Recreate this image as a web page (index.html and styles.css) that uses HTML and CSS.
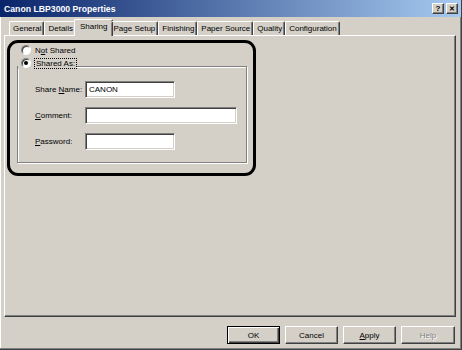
FILE: index.html
```html
<!DOCTYPE html>
<html lang="en">
<head>
    <meta charset="UTF-8">
    <title>Canon LBP3000 Properties</title>
    <link rel="stylesheet" href="styles.css">
</head>
<body>
    <div class="window">
        <div class="titlebar">
            <span class="title">Canon LBP3000 Properties</span>
            <div class="title-buttons">
                <span class="tbtn">?</span>
                <span class="tbtn close">&#x2715;</span>
            </div>
        </div>
        <div class="content">
            <div class="tabs">
                <div class="tab">General</div>
                <div class="tab">Details</div>
                <div class="tab active">Sharing</div>
                <div class="tab">Page Setup</div>
                <div class="tab">Finishing</div>
                <div class="tab">Paper Source</div>
                <div class="tab">Quality</div>
                <div class="tab">Configuration</div>
            </div>
            <div class="panel">
                <div class="highlight">
                    <label class="radio-row">
                        <span class="radio"></span>
                        <span>N<u>o</u>t Shared</span>
                    </label>
                    <fieldset class="group">
                        <legend>
                            <label class="radio-row">
                                <span class="radio checked"></span>
                                <span class="focus">Shared As:</span>
                            </label>
                        </legend>
                        <div class="field">
                            <span class="field-label">Share <u>N</u>ame:</span>
                            <span class="input short">CANON</span>
                        </div>
                        <div class="field">
                            <span class="field-label"><u>C</u>omment:</span>
                            <span class="input long"></span>
                        </div>
                        <div class="field">
                            <span class="field-label"><u>P</u>assword:</span>
                            <span class="input short"></span>
                        </div>
                    </fieldset>
                </div>
            </div>
            <div class="buttons">
                <button class="btn default">OK</button>
                <button class="btn">Cancel</button>
                <button class="btn"><u>A</u>pply</button>
                <button class="btn disabled">Help</button>
            </div>
        </div>
    </div>
</body>
</html>
```
FILE: styles.css
```css
* {
    margin: 0;
    padding: 0;
    box-sizing: border-box;
}

body {
    width: 462px;
    height: 350px;
    overflow: hidden;
    background: #d4d0c8;
    font-family: "Liberation Sans", Arial, sans-serif;
    font-size: 8px;
    color: #000;
}

.window {
    width: 462px;
    height: 350px;
    display: flex;
    flex-direction: column;
    border-right: 1px solid #404040;
    border-bottom: 1px solid #404040;
    box-shadow: inset -1px -1px 0 #808080, inset 1px 0 0 #fff;
}

.titlebar {
    height: 17px;
    display: flex;
    align-items: center;
    justify-content: space-between;
    padding: 0 3px 0 4px;
    background: linear-gradient(to right, #0a246a, #a6caf0);
    color: #fff;
}

.title {
    font-weight: bold;
    font-size: 8.7px;
}

.title-buttons {
    display: flex;
    gap: 2px;
}

.tbtn {
    width: 12px;
    height: 11px;
    display: flex;
    align-items: center;
    justify-content: center;
    background: #d4d0c8;
    color: #000;
    font-weight: bold;
    font-size: 8px;
    border-top: 1px solid #fff;
    border-left: 1px solid #fff;
    border-right: 1px solid #404040;
    border-bottom: 1px solid #404040;
    box-shadow: inset -1px -1px 0 #808080;
}

.tbtn.close {
    font-size: 7px;
}

.content {
    flex: 1;
    display: flex;
    flex-direction: column;
    padding: 2px 5px 0 4px;
}

.tabs {
    height: 16px;
    display: flex;
    align-items: flex-end;
    padding-left: 5px;
    position: relative;
    z-index: 1;
}

.tab {
    height: 14px;
    padding: 0 2px 0 3px;
    display: flex;
    align-items: center;
    border-top: 1px solid #fff;
    border-left: 1px solid #fff;
    border-right: 1px solid #404040;
    border-radius: 2px 2px 0 0;
    box-shadow: inset -1px 0 0 #808080;
}

.tab.active {
    height: 17px;
    margin: 0 -2px -1px;
    padding: 0 4px 3px 5px;
    background: #d4d0c8;
}

.tab.active + .tab {
    border-left: none;
}

.panel {
    height: 282px;
    padding: 4px 0 0 2px;
    border-top: 1px solid #fff;
    border-left: 1px solid #fff;
    border-right: 1px solid #404040;
    border-bottom: 1px solid #404040;
    box-shadow: inset -1px -1px 0 #808080;
}

.highlight {
    width: 249px;
    height: 136px;
    padding: 1px 6px 0 7px;
    border: 3px solid #000;
    border-radius: 11px;
}

.radio-row {
    height: 12px;
    display: flex;
    align-items: center;
    gap: 4px;
    padding-left: 4px;
}

.radio {
    width: 10px;
    height: 10px;
    border-radius: 50%;
    background: #fff;
    border: 1px solid;
    border-color: #808080 #fff #fff #808080;
    box-shadow: inset 1px 1px 0 #404040;
    display: flex;
    align-items: center;
    justify-content: center;
}

.radio.checked::after {
    content: "";
    width: 4px;
    height: 4px;
    border-radius: 50%;
    background: #000;
}

.focus {
    outline: 1px dotted #000;
    outline-offset: 0;
    padding: 0 1px;
}

.group {
    margin-top: 1px;
    padding: 6px 0 12px 17px;
    border: 1px solid #808080;
    box-shadow: 1px 1px 0 #fff, inset 1px 1px 0 #fff;
    display: flex;
    flex-direction: column;
    gap: 9px;
}

.group legend {
    margin-left: -17px;
    padding: 0 1px 6px 0;
}

.group legend .radio-row {
    padding-left: 3px;
    background: #d4d0c8;
}

.field {
    display: flex;
    align-items: center;
    height: 17px;
}

.field-label {
    width: 50px;
}

.input {
    height: 17px;
    display: flex;
    align-items: center;
    padding-left: 3px;
    background: #fff;
    border: 1px solid;
    border-color: #808080 #fff #fff #808080;
    box-shadow: inset 1px 1px 0 #404040, inset -1px -1px 0 #d4d0c8;
}

.input.short {
    width: 90px;
}

.input.long {
    width: 152px;
}

.buttons {
    display: flex;
    justify-content: flex-end;
    gap: 5px;
    margin-top: 9px;
    padding-right: 1px;
}

.btn {
    width: 53px;
    height: 18px;
    font-family: inherit;
    font-size: 8px;
    background: #d4d0c8;
    color: #000;
    border-top: 1px solid #fff;
    border-left: 1px solid #fff;
    border-right: 1px solid #404040;
    border-bottom: 1px solid #404040;
    box-shadow: inset -1px -1px 0 #808080;
}

.btn.default {
    border: 1px solid #000;
    box-shadow: inset 1px 1px 0 #fff, inset -1px -1px 0 #404040, inset -2px -2px 0 #808080;
}

.btn.disabled {
    width: 54px;
    color: #808080;
    text-shadow: 1px 1px 0 #fff;
}
```
